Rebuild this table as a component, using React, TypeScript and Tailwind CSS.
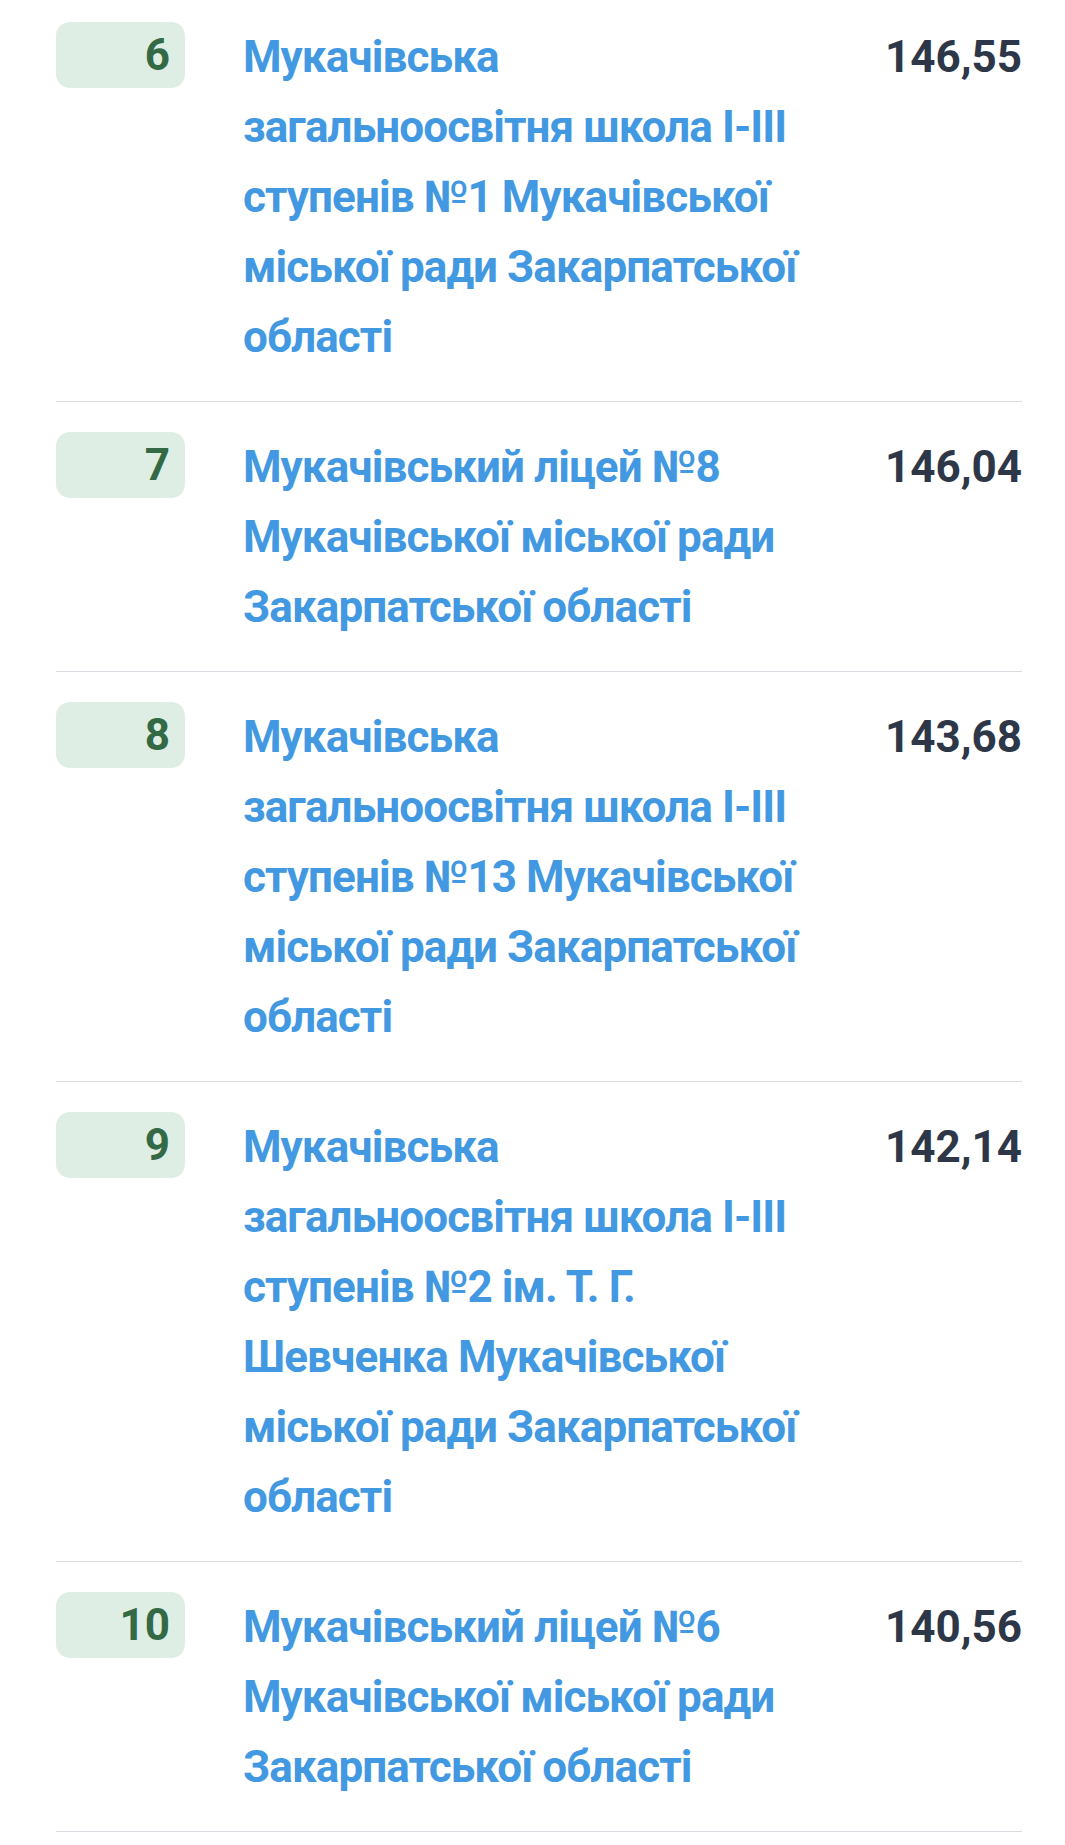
import React from "react";

type School = { rank: number; name: string; score: string };

const SCHOOLS: School[] = [
  {
    rank: 6,
    name: "Мукачівська загальноосвітня школа І-ІІІ ступенів №1 Мукачівської міської ради Закарпатської області",
    score: "146,55",
  },
  {
    rank: 7,
    name: "Мукачівський ліцей №8 Мукачівської міської ради Закарпатської області",
    score: "146,04",
  },
  {
    rank: 8,
    name: "Мукачівська загальноосвітня школа І-ІІІ ступенів №13 Мукачівської міської ради Закарпатської області",
    score: "143,68",
  },
  {
    rank: 9,
    name: "Мукачівська загальноосвітня школа І-ІІІ ступенів №2 ім. Т. Г. Шевченка Мукачівської міської ради Закарпатської області",
    score: "142,14",
  },
  {
    rank: 10,
    name: "Мукачівський ліцей №6 Мукачівської міської ради Закарпатської області",
    score: "140,56",
  },
];

function RankRow({ school }: { school: School }) {
  return (
    <li className="flex items-start border-b border-[#d9dde2] pt-[30px] pb-[29px] first:pt-0">
      <div className="flex h-[66px] w-[129px] shrink-0 items-center justify-end rounded-[14px] bg-[#dfeee5] pr-[15px] text-[44px] font-bold leading-none text-[#336a45]">
        {school.rank}
      </div>
      <a
        href="#"
        className="ml-[58px] w-[580px] text-[44px] font-bold leading-[70px] tracking-[-0.9px] text-[#4299e1] no-underline"
      >
        {school.name}
      </a>
      <div className="flex-1 text-right text-[44px] font-bold leading-[70px] text-[#2d3748]">
        {school.score}
      </div>
    </li>
  );
}

export default function App() {
  return (
    <div className="min-h-screen bg-white font-['Roboto','Noto_Sans',sans-serif]">
      <ul className="ml-[56px] mr-[43px] pt-[22px]">
        {SCHOOLS.map((s) => (
          <RankRow key={s.rank} school={s} />
        ))}
      </ul>
    </div>
  );
}
